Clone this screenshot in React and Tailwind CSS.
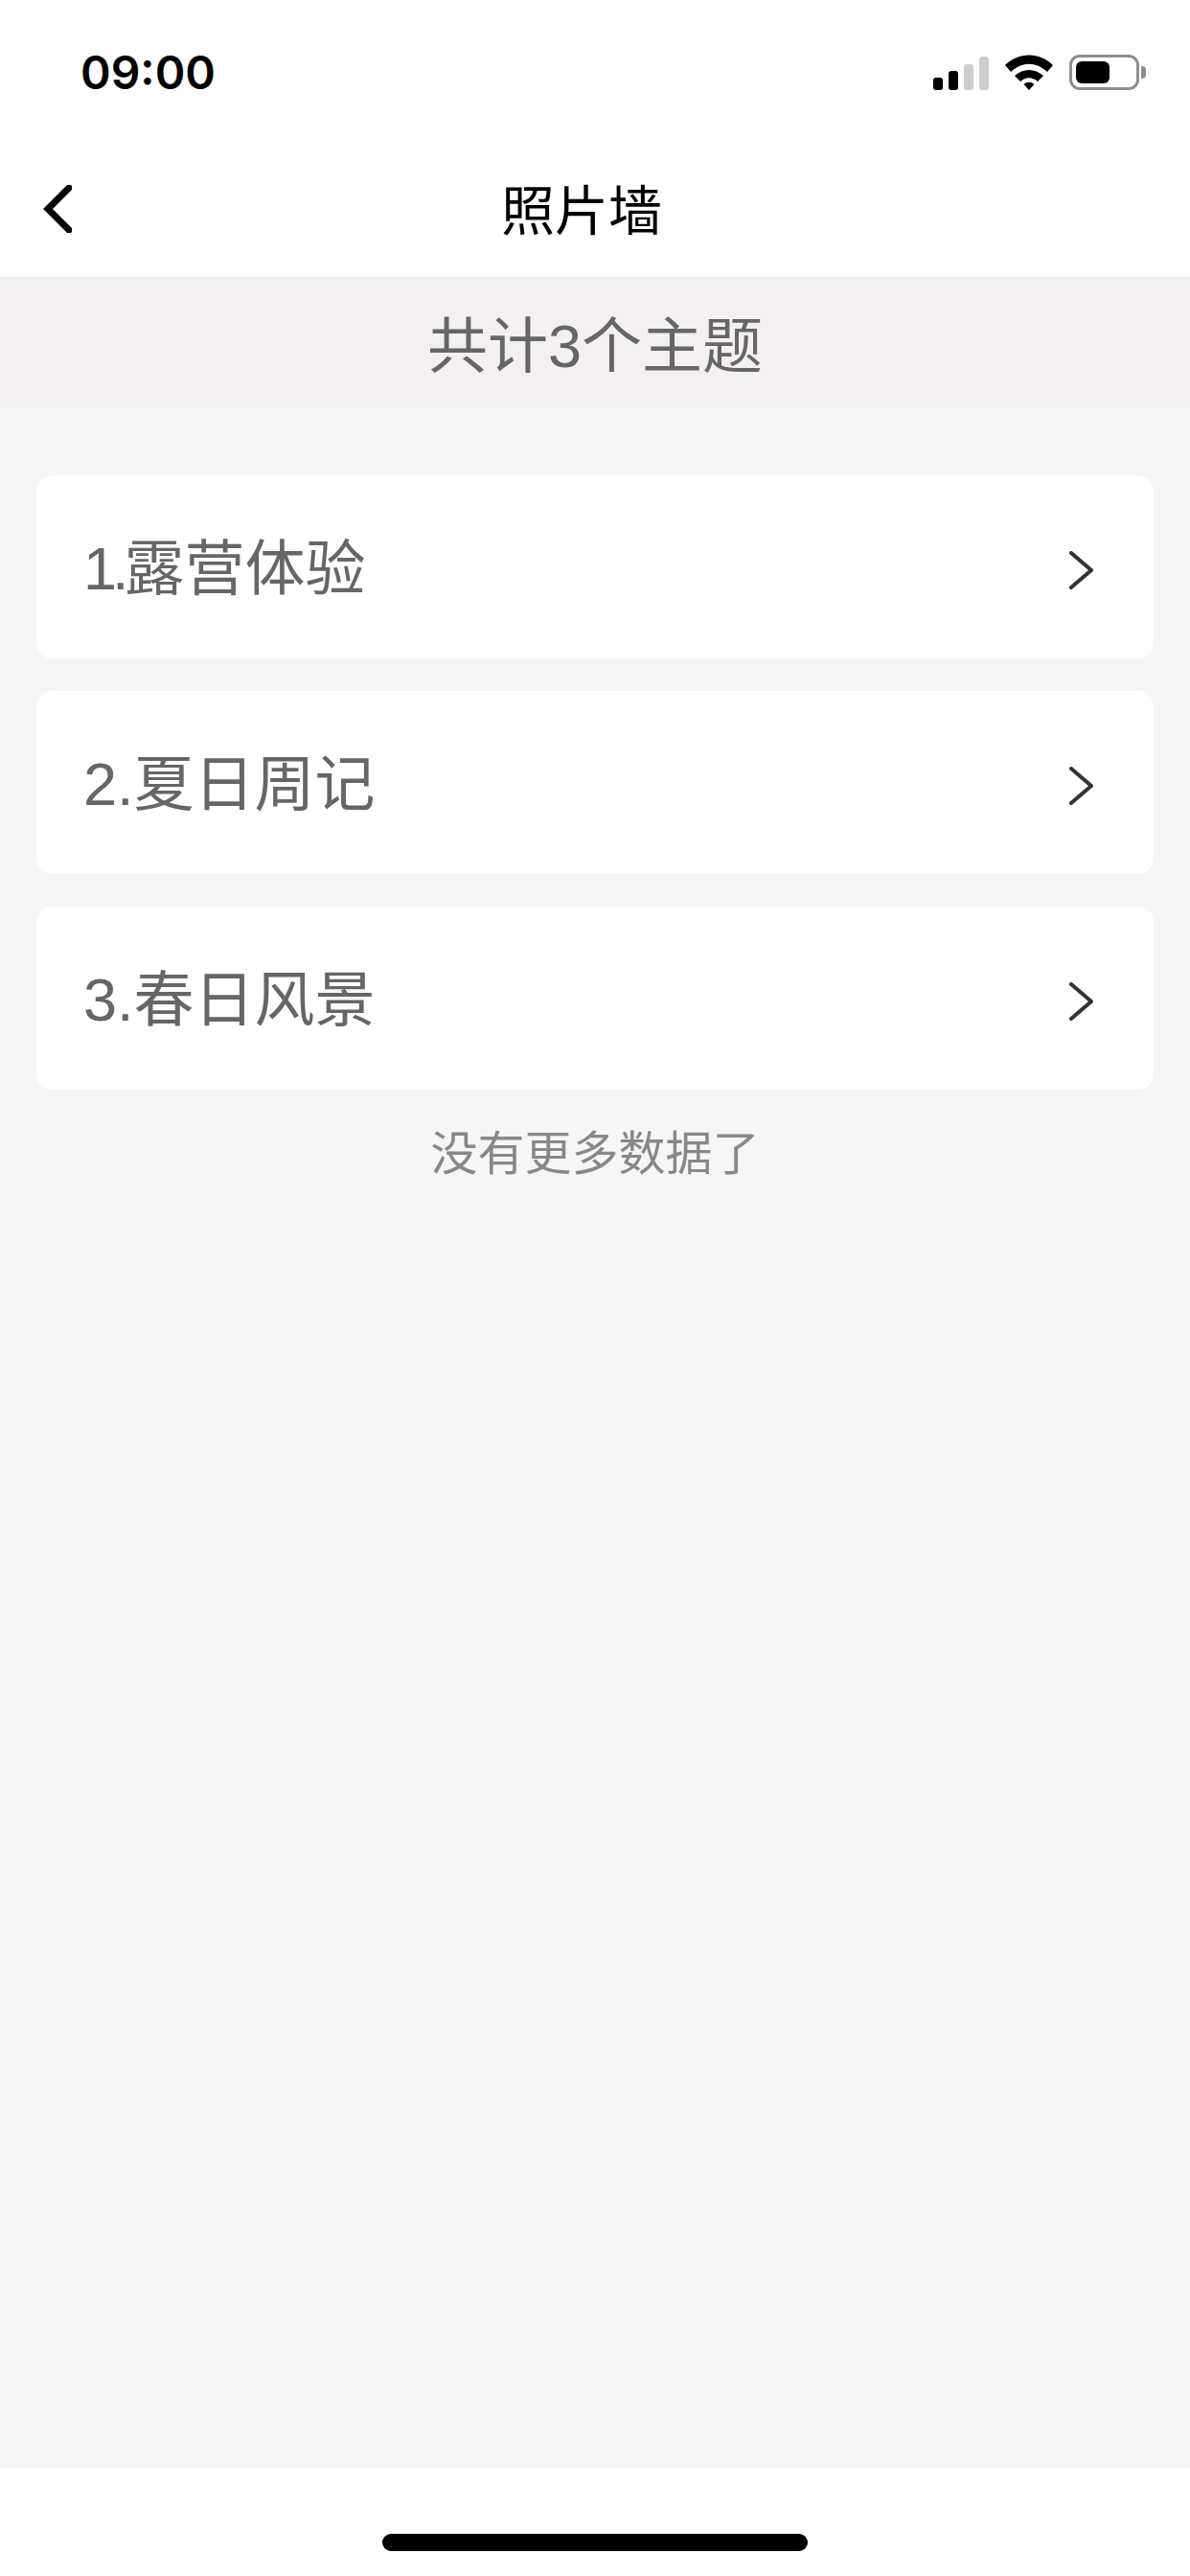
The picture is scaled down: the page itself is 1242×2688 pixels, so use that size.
const FONT = "font-['Liberation_Sans','Noto_Sans_CJK_SC',sans-serif]"

function Chevron() {
  return (
    <svg width="26" height="40" viewBox="0 0 26 40" fill="none" className="shrink-0 mt-[6px]">
      <path d="M2 2 L23 20 L2 38" stroke="#333" strokeWidth="4" strokeLinecap="round" strokeLinejoin="round" />
    </svg>
  )
}

function StatusIcons() {
  return (
    <div className="flex items-end">
      {/* signal */}
      <div className="flex items-end gap-[6px] h-[36px]">
        <div className="w-[10px] h-[13px] rounded-[3px] bg-black" />
        <div className="w-[10px] h-[20px] rounded-[3px] bg-black" />
        <div className="w-[10px] h-[27px] rounded-[3px] bg-[#cdcdcd]" />
        <div className="w-[10px] h-[35px] rounded-[3px] bg-[#cdcdcd]" />
      </div>
      {/* wifi */}
      <svg width="50" height="37" viewBox="0 0 50 37" className="ml-[17px]">
        <path d="M0 11 C14 -3 36 -3 50 11 L44 18 C32 7 18 7 6 18 Z" fill="#000" />
        <path d="M10 22 C19 14 31 14 40 22 L34 28 C28 23 22 23 16 28 Z" fill="#000" />
        <path d="M19.5 31 C23 28 27 28 30.5 31 L25 37 Z" fill="#000" />
      </svg>
      {/* battery */}
      <div className="ml-[17px] flex items-center">
        <div className="w-[73px] h-[37px] rounded-[11px] border-[3px] border-[#8e8e8e] p-[4px] flex">
          <div className="w-[35px] h-full rounded-[6px] bg-black" />
        </div>
        <div className="ml-[2px] w-[5px] h-[13px] rounded-r-[4px] bg-[#8e8e8e]" />
      </div>
    </div>
  )
}

function TopicRow({ num, name, tight }) {
  return (
    <div className="h-[191px] bg-white rounded-[16px] pl-[49px] pr-[62px] flex items-center justify-between">
      <span className="text-[63px] leading-none text-[#666] mt-[4px]">
        <span className={tight ? "tracking-[-5px]" : ""}>{num}.</span>
        {name}
      </span>
      <Chevron />
    </div>
  )
}

export default function App() {
  const topics = [
    { num: "1", name: "露营体验", tight: true },
    { num: "2", name: "夏日周记" },
    { num: "3", name: "春日风景" },
  ]

  return (
    <div className={`${FONT} min-h-[2688px] flex flex-col bg-[#f6f6f6]`}>
      {/* Status bar + nav */}
      <div className="bg-white h-[291px] border-b-2 border-[#ececec]">
        <div className="h-[146px] pl-[84px] pr-[46px] pt-[57px] flex items-start justify-between">
          <span className="font-['Inter'] text-[48px] leading-[37px] font-semibold text-black">09:00</span>
          <StatusIcons />
        </div>
        <div className="h-[143px] pl-[45px] flex items-center">
          <svg width="30" height="50" viewBox="0 0 30 50" fill="none" className="shrink-0">
            <path d="M27 3 L5 25 L27 47" stroke="#000" strokeWidth="7" strokeLinecap="round" strokeLinejoin="miter" />
          </svg>
          <span className="ml-[448px] mt-[6px] text-[56px] leading-none text-black">照片墙</span>
        </div>
      </div>

      {/* Count banner */}
      <div className="h-[134px] bg-[#f5f0f0] flex items-center justify-center">
        <span className="mt-[6px] text-[63px] leading-none text-[#666]">共计3个主题</span>
      </div>

      {/* Topics */}
      <div className="flex-1 px-[38px] pt-[71px]">
        <div className="flex flex-col gap-[34px]">
          {topics.map((t) => (
            <TopicRow key={t.num} {...t} />
          ))}
        </div>
        <div className="mt-[43px] text-center text-[49px] leading-none text-[#888]">没有更多数据了</div>
      </div>

      {/* Home indicator */}
      <div className="h-[113px] bg-white flex justify-center pt-[69px]">
        <div className="w-[444px] h-[18px] rounded-full bg-black" />
      </div>
    </div>
  )
}
